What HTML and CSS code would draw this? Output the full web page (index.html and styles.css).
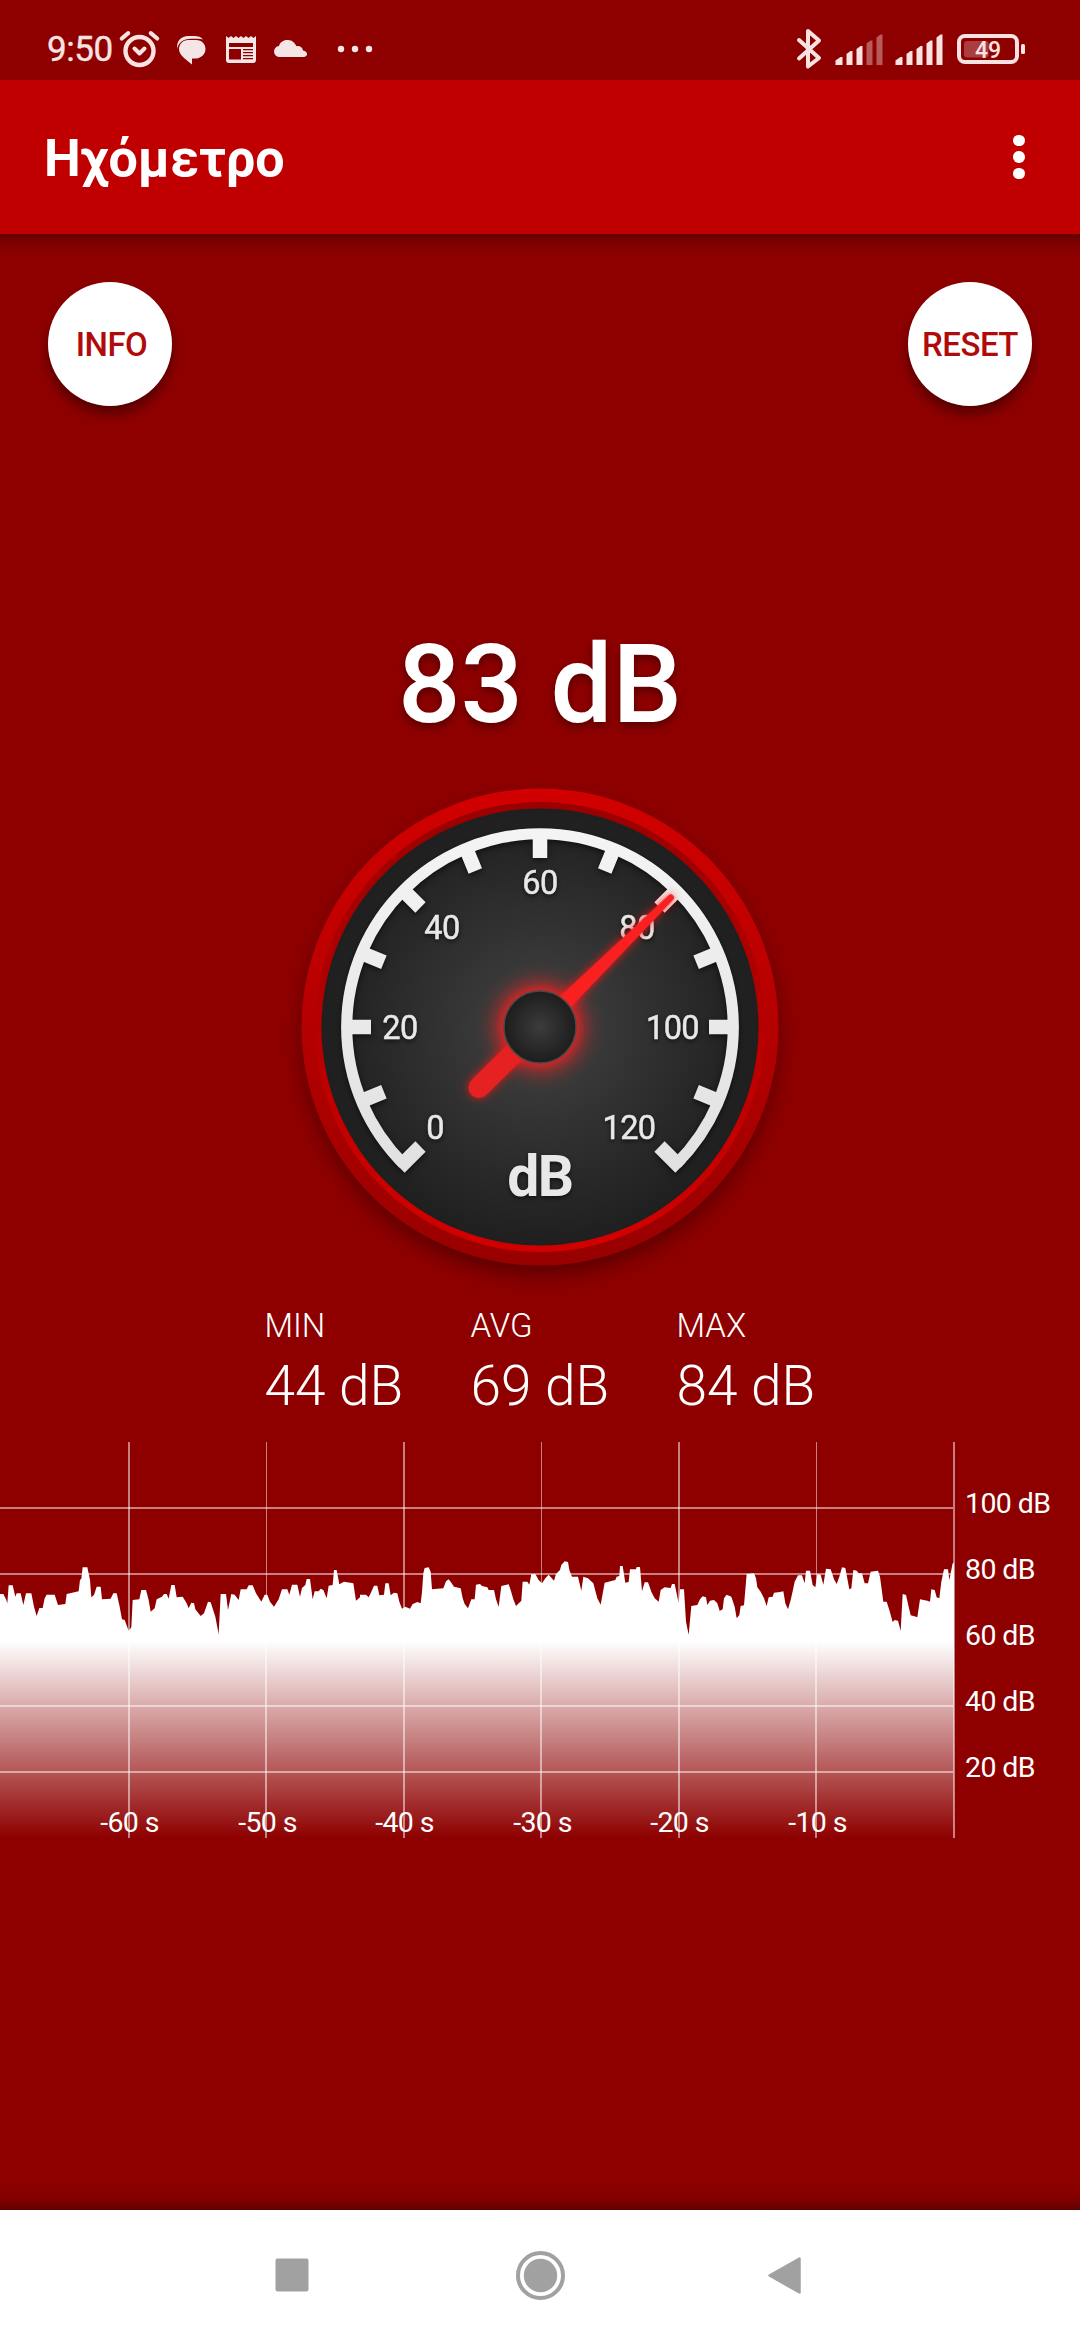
FILE: index.html
```html
<!DOCTYPE html>
<html lang="el">
<head>
    <meta charset="UTF-8" />
    <meta name="viewport" content="width=device-width, initial-scale=1.0" />
    <title>Ηχόμετρο</title>
    <link rel="stylesheet" href="styles.css">
</head>
<body>
    <!-- Status bar -->
    <div class="status-bar">
      <span class="clock">9:50</span>
      <svg class="status-left" width="260" height="40" viewBox="118 29 260 40">
        <g fill="none" stroke="#f8e2e2" stroke-linecap="round">
          <circle cx="139.5" cy="51" r="14" stroke-width="4.400" />
          <path d="M134.5 48.5l5 5 5-5" stroke-width="4" stroke-linejoin="round" />
          <path d="M121.8 38.5l6.4-5.400M157.200 38.500l-6.400-5.400" stroke-width="4.200" />
        </g>
        <g fill="#f4e6e6">
          <path d="M177.200 49c-1-8 4-13 11-13h6c4 0 7 1 9 3.600c-3-.9-5-.9-12-.9c-8 0-13 4-14 10.300z" />
          <path d="M188 40h8c6 0 9.500 4 9.500 9s-4 9-9.500 9.500h-4V64.500C185 59 179.500 55 179 49.500C179 44 183 40 188 40z" />
          <path fill-rule="evenodd" d="M226 36l2.500 2 2.500-2 2.500 2 2.500-2 2.500 2 2.500-2 2.500 2 2.500-2 2.500 2 2.500-2 2.500 2 2.500-2V60a3 3 0 0 1-3 3H229a3 3 0 0 1-3-3zM229 43v4h24v-4zM229 49v10.500h12V49zM243 49v1.200h10V49zM243 52v1.200h10V52zM243 55v1.200h10V55zM243 58v1.200h10V58z" />
          <path d="M280 57a5.500 5.500 0 0 1-1-11c1-4 5-6.500 9-6 4 0 7 3 8.500 6.300c3-.8 6 1 6.500 4.200c5 .5 5.500 6 1 6.500z" />
          <circle cx="341" cy="49" r="3.200" />
          <circle cx="355" cy="49" r="3.200" />
          <circle cx="369" cy="49" r="3.200" />
        </g>
      </svg>
      <svg class="status-right" width="232" height="42" viewBox="795 28 232 42">
        <path d="M799 40l20 18-11 8.500V31l11 9.500-20 18" fill="none" stroke="#f8e2e2" stroke-width="4" stroke-linejoin="round" stroke-linecap="round" />
        <g fill="#f8e2e2">
          <path d="M835.500 65v-4.500l5-3.500h2v8z" />
          <path d="M846.500 65V54l4-3h2v14z" />
          <path d="M856.500 65V49l4-3h2v19z" />
          <path opacity=".4" d="M866.500 65V43.500l4-3h2V65z" />
          <path opacity=".4" d="M876.500 65V37.500l4-3h2V65z" />
          <path d="M895.500 65v-4.500l5-3.500h2v8z" />
          <path d="M906.500 65V54l4-3h2v14z" />
          <path d="M916.500 65V49l4-3h2v19z" />
          <path d="M926.500 65V43.500l4-3h2V65z" />
          <path d="M936.500 65V37.500l4-3h2V65z" />
          <rect x="1021" y="44" width="4" height="10" rx="1.500" />
          <rect opacity=".27" x="964" y="41" width="24.500" height="16.500" rx="3" />
          <text class="battery-text" x="988" y="57.800">49</text>
        </g>
        <rect x="959" y="36" width="58" height="26" rx="6" fill="none" stroke="#f8e2e2" stroke-width="4" />
      </svg>
    </div>

    <!-- App bar -->
    <header class="app-bar">
      <h1>Ηχόμετρο</h1>
      <button class="menu" aria-label="Menu"><i></i><i></i><i></i></button>
    </header>

    <main class="content">
      <div class="actions">
        <button class="round-button info">INFO</button>
        <button class="round-button">RESET</button>
      </div>

      <div class="reading">83 dB</div>

      <!-- Gauge, centre is 0,0 -->
      <svg class="gauge" width="540" height="540" viewBox="-270 -270 540 540">
        <defs>
          <linearGradient id="rim" x1="0" y1="0" x2="0" y2="1">
            <stop offset="0" stop-color="#d20000" />
            <stop offset="1" stop-color="#980000" />
          </linearGradient>
          <linearGradient id="rimInner" x1="0" y1="0" x2="0" y2="1">
            <stop offset="0" stop-color="#9a0000" />
            <stop offset="1" stop-color="#d20000" />
          </linearGradient>
          <radialGradient id="face">
            <stop offset="0" stop-color="#424242" />
            <stop offset="1" stop-color="#1f1f1f" />
          </radialGradient>
          <radialGradient id="hub">
            <stop offset="0" stop-color="#3c3c3c" />
            <stop offset="1" stop-color="#1d1d1d" />
          </radialGradient>
          <radialGradient id="glow">
            <stop offset=".56" stop-color="#ff1e1e" stop-opacity=".72" />
            <stop offset=".7" stop-color="#ff1e1e" stop-opacity=".3" />
            <stop offset=".84" stop-color="#ff1e1e" stop-opacity=".08" />
            <stop offset="1" stop-color="#ff1e1e" stop-opacity="0" />
          </radialGradient>
          <linearGradient id="scale" gradientUnits="userSpaceOnUse" x1="0" y1="-200" x2="0" y2="200">
            <stop offset="0" stop-color="#f4f4f4" />
            <stop offset="1" stop-color="#dedede" />
          </linearGradient>
        </defs>
        <circle class="rim" r="238.500" fill="url(#rim)" />
        <circle r="225" fill="url(#rimInner)" />
        <circle r="218.500" fill="url(#face)" />
        <g class="scale" fill="none" stroke="url(#scale)">
          <path stroke-width="11.200" d="M-136.700 136.700A193.300 193.300 0 1 1 136.700 136.700" />
          <path stroke-width="14.500" d="M-119.500 119.500L-140.500 140.500M-156.100 64.700L-178 73.700M-169 .01L-190 0M-156.100-64.700L-178-73.700M-119.500-119.500L-137-137M-64.700-156.100L-73.700-178M0-169L.01-190M64.700-156.100L73.700-178M119.500-119.500L137-137M156.100-64.700L178-73.700M169 0L190 .01M156.100 64.700L178 73.700M119.500 119.500L140.500 140.500" />
        </g>
        <g class="scale-labels">
          <text x="-105" y="112">0</text>
          <text x="-140" y="11.500">20</text>
          <text x="-98" y="-88.500">40</text>
          <text x="0" y="-133.500">60</text>
          <text x="97" y="-88.500">80</text>
          <text x="132.500" y="11.500">100</text>
          <text x="89" y="112">120</text>
          <text class="unit" x="0" y="168.500">dB</text>
        </g>
        <circle r="65" fill="url(#glow)" />
        <g class="needle" transform="rotate(45.300)">
          <path d="M-10.500 25H10.500V86A10.500 10.500 0 0 1-10.500 86z" fill="#e62121" />
          <path d="M-8-25L-3.300-184A3.300 3.300 0 0 1 3.300-184L8-25z" fill="#fa2020" />
        </g>
        <circle r="36" fill="url(#hub)" stroke="#484848" stroke-width="1.500" />
      </svg>

      <div class="stats">
        <div class="stat"><span>MIN</span><strong>44 dB</strong></div>
        <div class="stat"><span>AVG</span><strong>69 dB</strong></div>
        <div class="stat"><span>MAX</span><strong>84 dB</strong></div>
      </div>

      <!-- History graph: 20 dB = 66px, 10 s = 137.5px -->
      <svg class="graph" width="1080" height="400" viewBox="0 0 1080 400">
        <defs>
          <linearGradient id="level" gradientUnits="userSpaceOnUse" x1="0" y1="633" x2="0" y2="1224">
            <stop offset="0" stop-color="#fff" />
            <stop offset="1" stop-color="#fff" stop-opacity="0" />
          </linearGradient>
        </defs>
        <g class="grid">
          <path d="M0 65h953v2H0zM0 131h953v2H0zM0 197h953v2H0zM0 263h953v2H0zM0 329h953v2H0z" />
          <path d="M128 0h2v396h-2zM403 0h2v396h-2zM678 0h2v396h-2zM953 0h2v396h-2z" />
          <path d="M266 0h1v199h-1zM541 0h1v199h-1zM816 0h1v199h-1zM265 199h2v197h-2zM540 199h2v197h-2zM815 199h2v197h-2z" />
        </g>
        <g fill="url(#level)">
          <path transform="translate(0 -12) scale(.33333)" d="M0 1224V492L10 492 18 508 22 520 26 466 38 466 46 500 50 490 62 490 70 525 78 490 94 490 102 530 110 558 118 534 128 534 134 505 140 494 164 494 174 525 196 522 200 492 236 484 240 450 244 446 248 412 262 412 270 450 274 502 282 495 290 470 302 470 306 508 332 506 340 490 350 490 358 525 366 568 374 570 386 602 394 592 398 510 418 508 424 480 438 480 446 510 452 545 464 535 470 508 486 500 492 492 500 492 506 506 514 465 524 465 530 502 548 500 560 520 566 535 574 518 582 520 586 538 602 558 612 550 624 515 632 517 646 560 656 612 662 492 678 492 684 540 694 492 704 494 716 510 722 478 740 478 746 466 758 466 768 490 784 515 794 494 802 494 810 515 822 530 836 508 846 478 862 478 868 494 876 464 892 464 900 500 906 474 916 465 920 447 930 447 938 508 944 484 956 484 962 476 970 480 980 505 986 467 998 465 1002 420 1010 420 1018 463 1032 455 1060 460 1068 512 1080 502V1224z" />
          <path transform="translate(360 -12) scale(.33333)" d="M0 1224V494L18 494 26 502 32 490 42 467 52 467 58 496 72 494 76 460 86 460 92 496 102 488 112 490 118 515 126 536 136 530 150 536 158 522 172 516 182 520 186 486 190 430 194 414 206 412 212 425 216 478 250 475 258 454 266 448 274 458 282 470 302 475 308 505 314 522 324 535 334 508 344 508 348 464 360 462 366 468 382 472 386 480 402 480 408 508 416 530 424 468 446 463 452 480 460 508 468 528 484 512 488 455 502 455 508 464 514 432 526 432 536 450 546 460 556 445 566 434 582 452 588 432 600 420 604 405 614 394 624 396 628 420 636 440 654 440 664 482 670 440 684 445 700 460 712 505 722 524 734 458 766 450 770 440 778 438 780 408 788 408 796 458 806 456 810 418 828 418 830 411 840 411 846 484 854 457 864 457 874 485 884 505 896 515 902 480 914 472 932 474 936 462 944 462 952 500 956 520 960 478 972 478 978 575 986 614 994 528 1012 525 1020 508 1028 499 1038 502 1042 525 1050 512 1062 510 1072 520 1080 545V1224z" />
          <path transform="translate(720 -12) scale(.33333)" d="M0 1224V542L8 538 12 505 20 494 34 500 44 530 50 565 58 555 62 528 72 526 80 432 102 430 108 445 112 472 122 485 132 505 140 528 146 502 158 500 162 488 180 486 190 484 196 520 204 538 212 510 218 484 224 455 234 436 246 436 254 460 258 422 270 422 278 465 286 472 292 432 302 434 310 464 318 416 332 418 342 448 350 462 358 440 366 412 376 414 388 478 394 475 400 420 410 422 416 430 426 430 434 460 444 460 452 425 474 422 480 440 490 515 500 515 508 540 518 576 524 570 534 572 542 602 548 492 558 495 566 530 572 556 588 560 592 562 600 508 622 512 630 515 634 478 644 480 650 502 658 505 664 455 672 418 684 418 688 450 698 400 702 400V1224z" />
        </g>
        <g class="graph-labels">
          <text x="965" y="71">100 dB</text>
          <text x="965" y="137">80 dB</text>
          <text x="965" y="203">60 dB</text>
          <text x="965" y="269">40 dB</text>
          <text x="965" y="335">20 dB</text>
          <g text-anchor="middle">
            <text x="129.500" y="390">-60 s</text>
            <text x="267.500" y="390">-50 s</text>
            <text x="404.500" y="390">-40 s</text>
            <text x="542.500" y="390">-30 s</text>
            <text x="679.500" y="390">-20 s</text>
            <text x="817.500" y="390">-10 s</text>
          </g>
        </g>
      </svg>
    </main>

    <!-- System navigation -->
    <nav class="nav-bar">
      <svg width="528" height="52" viewBox="274 2249 528 52" fill="#a1a1a1">
        <rect x="275.500" y="2258.500" width="33" height="33" rx="2" />
        <circle cx="540.500" cy="2275.500" r="16.700" />
        <circle cx="540.500" cy="2275.500" r="22.500" fill="none" stroke="#a1a1a1" stroke-width="4" />
        <path d="M769.500 2275.500L799.500 2258.500V2292.500z" stroke="#a1a1a1" stroke-width="2.500" stroke-linejoin="round" />
      </svg>
    </nav>
</body>
</html>
```
FILE: styles.css
```css
* {
  margin: 0;
  padding: 0;
  box-sizing: border-box;
}

body {
  font-family: Roboto, sans-serif;
  background-color: #8e0000;
  color: #ffffff;
  width: 1080px;
  height: 2340px;
  overflow: hidden;
  display: flex;
  flex-direction: column;
}

svg {
  display: block;
  flex: none;
}

button {
  border: none;
  background: none;
  font-family: inherit;
}

/* Status bar */
.status-bar {
  height: 80px;
  display: flex;
  align-items: flex-start;
  padding: 28px 53px 0 47px;
  color: #f8e2e2;
}

.clock {
  width: 71px;
  font-size: 35px;
  line-height: 44px;
  letter-spacing: -0.4px;
  -webkit-text-stroke: 0.4px #f8e2e2;
}

.status-left {
  margin-top: 1px;
}

.status-right {
  margin-left: auto;
}

.battery-text {
  font-size: 23px;
  font-weight: 500;
  text-anchor: middle;
}

/* App bar */
.app-bar {
  height: 154px;
  flex: none;
  display: flex;
  align-items: center;
  justify-content: space-between;
  padding: 0 55px 0 44px;
  background: #c00000;
}

.app-bar h1 {
  font-size: 52px;
  font-weight: 700;
  line-height: 60px;
  padding-top: 4px;
}

.menu {
  display: flex;
  flex-direction: column;
  gap: 5px;
}

.menu i {
  width: 11.6px;
  height: 11.6px;
  border-radius: 50%;
  background: #fff;
}

/* Content */
.content {
  height: 1976px;
  flex: none;
  display: flex;
  flex-direction: column;
  align-items: center;
  background:
    linear-gradient(#640000, rgba(120, 0, 0, 0.6) 10px, rgba(142, 0, 0, 0) 24px) top / 100% 24px no-repeat,
    linear-gradient(rgba(142, 0, 0, 0), rgba(120, 0, 0, 0.6) 14px, #600000) bottom / 100% 24px no-repeat;
}

.actions {
  width: 100%;
  display: flex;
  justify-content: space-between;
  padding: 48px 48px 0;
}

.round-button {
  width: 124px;
  height: 124px;
  padding-top: 2px;
  border-radius: 50%;
  background: #fff;
  color: #b00a0a;
  font-size: 33px;
  font-weight: 500;
  line-height: 40px;
  letter-spacing: -0.5px;
  white-space: nowrap;
  box-shadow: 0 8px 12px rgba(0, 0, 0, 0.4);
}

.info {
  padding-left: 3px;
}

.reading {
  margin-top: 214px;
  font-size: 110px;
  font-weight: 500;
  line-height: 130px;
  text-shadow: 0 4px 10px rgba(0, 0, 0, 0.4);
}

.gauge {
  margin-top: 7px;
}

.rim {
  filter: drop-shadow(0 10px 10px rgba(0, 0, 0, 0.35));
}

.scale {
  filter: drop-shadow(0 2px 3px rgba(0, 0, 0, 0.6));
}

.scale-labels {
  font-size: 32.5px;
  letter-spacing: -0.6px;
  fill: #e8e8e8;
  stroke: #e8e8e8;
  stroke-width: 0.5px;
  text-anchor: middle;
  filter: drop-shadow(0 2px 2px rgba(0, 0, 0, 0.6));
}

.unit {
  font-size: 57px;
  font-weight: 700;
  letter-spacing: -1.5px;
  stroke: none;
}

.needle {
  filter: drop-shadow(0 0 5px rgba(255, 20, 20, 0.8));
}

.stats {
  display: grid;
  grid-template-columns: repeat(3, 206px);
  padding-left: 67px;
  margin-top: 9px;
  font-weight: 300;
}

.stat {
  display: flex;
  flex-direction: column;
}

.stat span {
  font-size: 33px;
  line-height: 40px;
}

.stat strong {
  font-size: 55px;
  font-weight: 300;
  line-height: 64px;
  padding-top: 8px;
}

/* Graph */
.graph {
  margin-top: 24px;
}

.grid {
  fill: rgba(255, 255, 255, 0.5);
}

.graph-labels {
  font-size: 28.5px;
  letter-spacing: -0.6px;
  fill: #fff;
}

/* System navigation */
.nav-bar {
  height: 130px;
  flex: none;
  display: flex;
  align-items: center;
  justify-content: center;
  padding-right: 4px;
  background: #fff;
}
```
